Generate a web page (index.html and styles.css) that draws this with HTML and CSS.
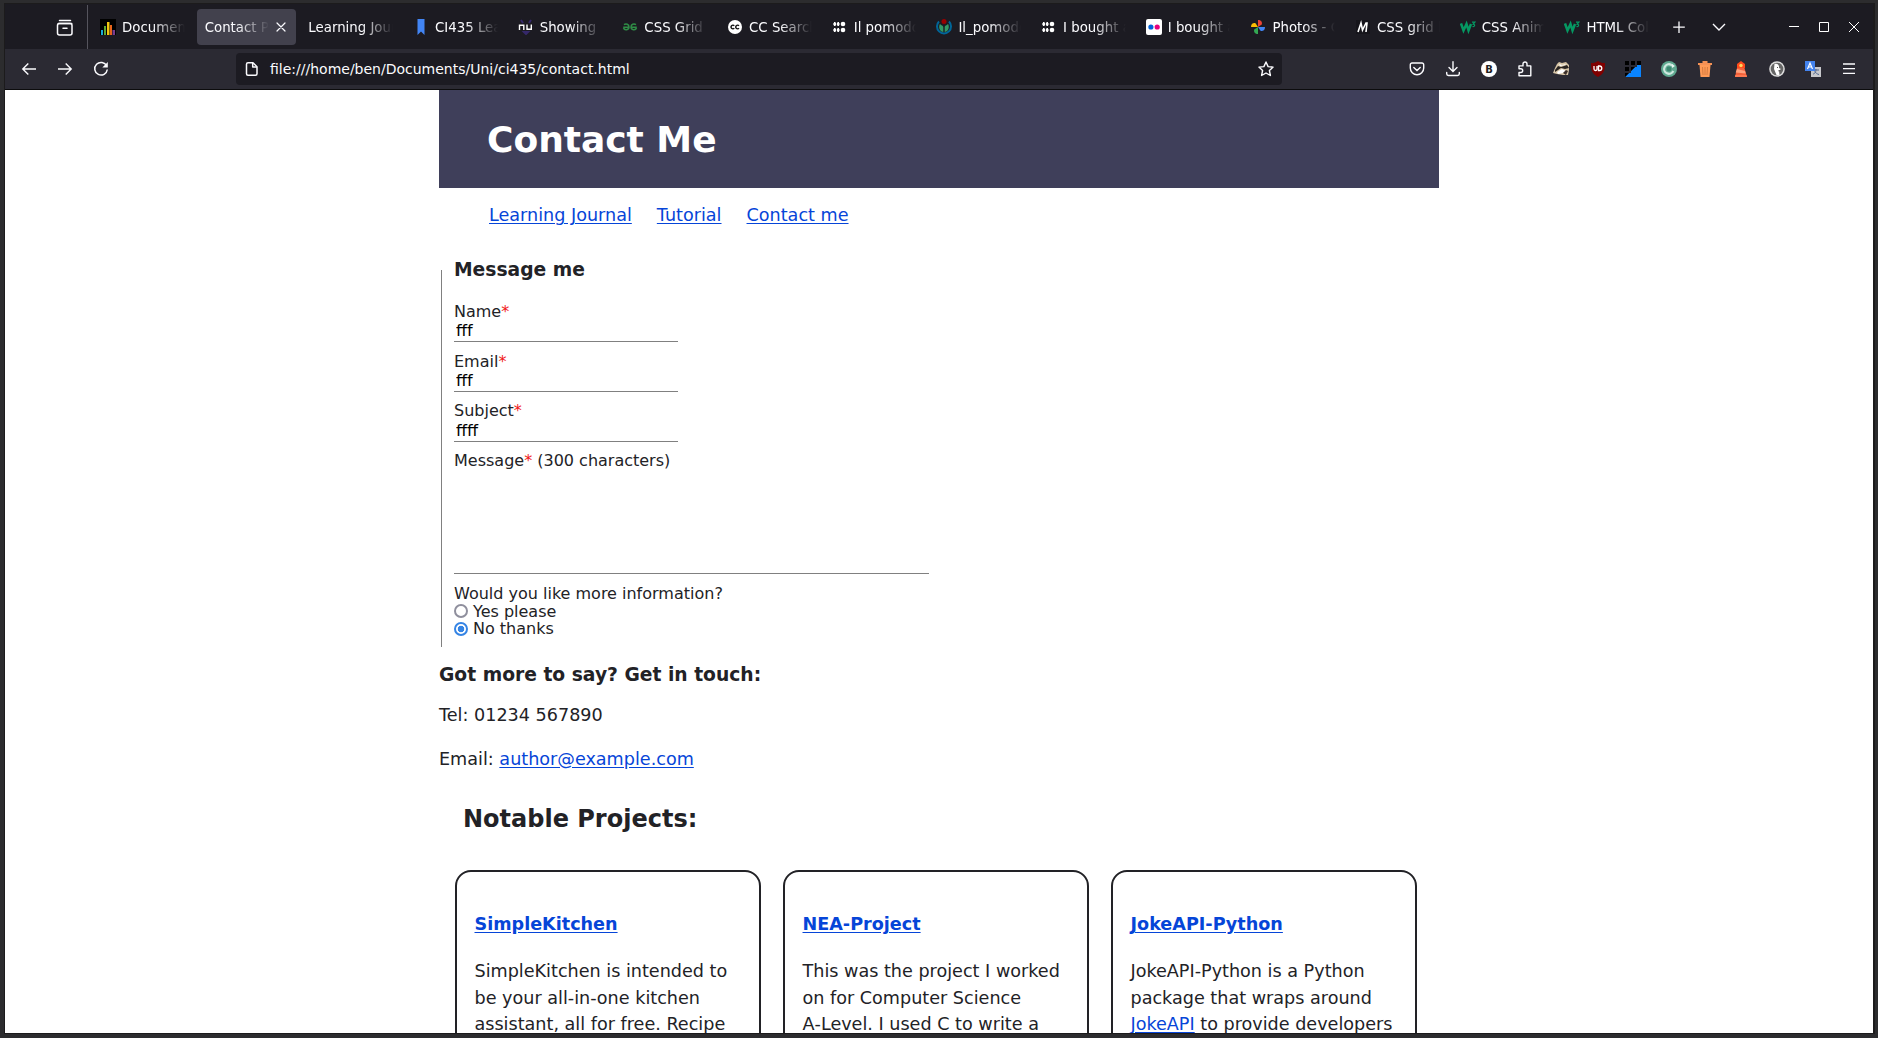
FILE: index.html
```html
<!DOCTYPE html>
<html lang="en">
<head>
<meta charset="utf-8">
<title>Contact Page</title>
<link rel="stylesheet" href="styles.css">
</head>
<body>
<div class="window">
  <div class="tabbar">
    <svg class="view-icon" width="18" height="18" viewBox="0 0 18 18" fill="none" stroke="#fbfbfe" stroke-width="1.5" stroke-linecap="round"><path d="M3.5 1.5h11M2.3 4.5h13.4"/><rect x="1.5" y="4.5" width="14.5" height="11.5" rx="2"/><path d="M7 9.2h4"/></svg>
    <div class="tabs">
      <div class="tab"><svg width="16" height="16" viewBox="0 0 16 16"><path d="M0 0h16v16H0z" fill="#000"/><path d="M1 11h2v5H1z" fill="#19a9d5"/><path d="M4 7h2v9H4z" fill="#5aa832"/><path d="M7 3h2.500v13H7z" fill="#f1c40f"/><path d="M10 6h2v10h-2z" fill="#e8641b"/><path d="M12.500 11h2.500v5h-2.500z" fill="#7a3c8e"/></svg><span class="label">Documents</span></div>
      <div class="tab active"><span class="label">Contact Page</span><svg class="close" width="16" height="16" viewBox="0 0 16 16" stroke="#fbfbfe" stroke-width="1.200" stroke-linecap="round"><path d="M4 4l8 8M12 4l-8 8"/></svg></div>
      <div class="tab"><span class="label">Learning Journal</span></div>
      <div class="tab"><svg width="16" height="16" viewBox="0 0 16 16"><path d="M4.500 0h7v16L8 12.500 4.500 16z" fill="#4285f4"/></svg><span class="label">CI435 Learning</span></div>
      <div class="tab"><svg width="16" height="16" viewBox="0 0 16 16"><path d="M3 1l2 3M13 1l-2 3M6 13l2 2 2-2z" stroke="#35286a" stroke-width="2" fill="#35286a"/><path d="M1.500 11V6.200h4.300V11M9 5.500v4.800h4.300V5.500" fill="none" stroke="#fff" stroke-width="1.400"/></svg><span class="label">Showing results</span></div>
      <div class="tab"><svg width="16" height="16" viewBox="0 0 16 16" fill="none" stroke="#2f8d46" stroke-width="1.500"><path d="M7 8.300H1.200M2 5.700c2-1.500 5-.5 5 2.300 0 3-4.500 4-5.500.8M9 8.300h5.800M14 5.700c-2-1.500-5-.5-5 2.300 0 3 4.500 4 5.500.8"/></svg><span class="label">CSS Grid Layout</span></div>
      <div class="tab"><svg width="16" height="16" viewBox="0 0 16 16"><circle cx="8" cy="8" r="7" fill="#fff"/><path d="M7.300 6.700a1.900 1.900 0 1 0 0 2.600M12 6.700a1.900 1.900 0 1 0 0 2.600" fill="none" stroke="#111" stroke-width="1.400"/></svg><span class="label">CC Search</span></div>
      <div class="tab"><svg width="16" height="16" viewBox="0 0 16 16" fill="#fff"><path d="M2 3h1.500v4H2zM5.500 3H7v4H5.500zM2 9h1.500v4H2zM5.500 9H7v4H5.500z"/><circle cx="11" cy="5" r="2.300"/><circle cx="11" cy="11" r="2.300"/><circle cx="2.700" cy="5" r="1.500"/><circle cx="6.200" cy="5" r="1.500"/><circle cx="2.700" cy="11" r="1.500"/><circle cx="6.200" cy="11" r="1.500"/></svg><span class="label">Il pomodoro</span></div>
      <div class="tab"><svg width="16" height="16" viewBox="0 0 16 16"><path d="M3 2.500a7 7 0 1 0 10 0" fill="none" stroke="#006699" stroke-width="2"/><path d="M7.300 13C2 12 3 6 4 5c1.500 2 3 1 3.300 3zM8.700 13C14 12 13 6 12 5c-1.500 2-3 1-3.300 3z" fill="#339966"/><circle cx="8" cy="2.500" r="2.500" fill="#990000"/></svg><span class="label">Il_pomodoro</span></div>
      <div class="tab"><svg width="16" height="16" viewBox="0 0 16 16" fill="#fff"><path d="M2 3h1.500v4H2zM5.500 3H7v4H5.500zM2 9h1.500v4H2zM5.500 9H7v4H5.500z"/><circle cx="11" cy="5" r="2.300"/><circle cx="11" cy="11" r="2.300"/><circle cx="2.700" cy="5" r="1.500"/><circle cx="6.200" cy="5" r="1.500"/><circle cx="2.700" cy="11" r="1.500"/><circle cx="6.200" cy="11" r="1.500"/></svg><span class="label">I bought a</span></div>
      <div class="tab"><svg width="16" height="16" viewBox="0 0 16 16"><rect width="16" height="16" rx="2" fill="#fff"/><circle cx="4.900" cy="8" r="2.600" fill="#0063dc"/><circle cx="11.200" cy="8" r="2.600" fill="#e6007e"/></svg><span class="label">I bought a</span></div>
      <div class="tab"><svg width="16" height="16" viewBox="0 0 16 16"><path d="M8 8V1c3 0 4.500 2 3.800 4.500z" fill="#ea4335"/><path d="M8 8h7c0 3-2 4.500-4.500 3.800z" fill="#4285f4"/><path d="M8 8v7c-3 0-4.500-2-3.800-4.500z" fill="#34a853"/><path d="M8 8H1c0-3 2-4.500 4.500-3.800z" fill="#fbbc04"/></svg><span class="label">Photos - Google</span></div>
      <div class="tab"><svg width="16" height="16" viewBox="0 0 16 16"><path d="M1 1h14v14H1z" fill="#15141a"/><path d="M3 13l3-9 1.500 7L11 4l1 0-1 9" fill="none" stroke="#fff" stroke-width="1.600"/></svg><span class="label">CSS grid layout</span></div>
      <div class="tab"><svg width="16" height="16" viewBox="0 0 16 16" fill="none" stroke="#059862"><path d="M1 4.500l2.500 7L6.500 5l2 6.500L11 5" stroke-width="2.500"/><path d="M12 3.200h2.800L13.200 5.200c2 0 2 2.600-.7 2.300" stroke-width="1.200"/></svg><span class="label">CSS Animations</span></div>
      <div class="tab"><svg width="16" height="16" viewBox="0 0 16 16" fill="none" stroke="#059862"><path d="M1 4.500l2.500 7L6.500 5l2 6.500L11 5" stroke-width="2.500"/><path d="M12 3.200h2.800L13.200 5.200c2 0 2 2.600-.7 2.300" stroke-width="1.200"/></svg><span class="label">HTML Colors</span></div>
    </div>
    <svg class="new-tab" width="16" height="16" viewBox="0 0 16 16" stroke="#fbfbfe" stroke-width="1.300"><path d="M8 2.500v11.500M2.200 8.200h11.600"/></svg>
    <svg class="all-tabs" width="16" height="16" viewBox="0 0 16 16" fill="none" stroke="#fbfbfe" stroke-width="1.400"><path d="M2 5l6 6 6-6"/></svg>
    <div class="controls">
      <svg width="12" height="12" viewBox="0 0 12 12" stroke="#fff"><path d="M1 5.500h10"/></svg>
      <svg width="12" height="12" viewBox="0 0 12 12" stroke="#fff" fill="none"><path d="M1.500 1.500h9v9h-9z"/></svg>
      <svg width="12" height="12" viewBox="0 0 12 12" stroke="#fff"><path d="M1 1l10 10M11 1L1 11"/></svg>
    </div>
  </div>

  <div class="toolbar">
    <div class="navigation">
      <svg width="16" height="16" viewBox="0 0 16 16" fill="none" stroke="#fbfbfe" stroke-width="1.400"><path d="M15 8H2M7.300 2.500L1.800 8l5.500 5.500"/></svg>
      <svg width="16" height="16" viewBox="0 0 16 16" fill="none" stroke="#fbfbfe" stroke-width="1.400"><path d="M1 8h13M8.700 2.500L14.200 8l-5.500 5.500"/></svg>
      <svg width="16" height="16" viewBox="0 0 16 16" fill="none" stroke="#fbfbfe" stroke-width="1.500"><path d="M13.700 5A6.300 6.300 0 1 0 14.300 8.500"/><path d="M14.800 1v5.500H9.300z" fill="#fbfbfe" stroke="none"/></svg>
    </div>
    <div class="urlbar">
      <svg width="16" height="16" viewBox="0 0 16 16" fill="none" stroke="#fbfbfe" stroke-width="1.500" stroke-linejoin="round"><path d="M4 1.700h5l4 4v7.100a1.500 1.500 0 0 1-1.500 1.500H4a1.500 1.500 0 0 1-1.500-1.500V3.200A1.500 1.500 0 0 1 4 1.700z"/><path d="M8.700 2v4H13"/></svg>
      <span class="address">file:///home/ben/Documents/Uni/ci435/contact.html</span>
      <svg width="16" height="16" viewBox="0 0 16 16" fill="none" stroke="#fbfbfe" stroke-width="1.400" stroke-linejoin="round"><path d="M8 1l2.100 4.600 5 .5-3.700 3.400 1 5L8 12l-4.400 2.500 1-5L.9 6.100l5-.5z"/></svg>
    </div>
    <div class="extensions">
      <svg width="16" height="16" viewBox="0 0 16 16" fill="none" stroke="#fbfbfe" stroke-width="1.400" stroke-linecap="round"><path d="M3 2h10a1.700 1.700 0 0 1 1.700 1.700V7a6.700 6.700 0 0 1-13.400 0V3.700A1.700 1.700 0 0 1 3 2z"/><path d="M4.800 6.500L8 9.500l3.200-3"/></svg>
      <svg width="16" height="16" viewBox="0 0 16 16" fill="none" stroke="#fbfbfe" stroke-width="1.400" stroke-linecap="round"><path d="M8 .8v9.500M4 6.600l4 4 4-4M1.700 11.500v1.300a1.700 1.700 0 0 0 1.700 1.700h9.200a1.700 1.700 0 0 0 1.700-1.700v-1.300"/></svg>
      <svg width="16" height="16" viewBox="0 0 16 16"><circle cx="8" cy="8" r="8" fill="#fff"/><text x="8" y="11.500" text-anchor="middle" class="glyph-b">B</text></svg>
      <svg width="16" height="16" viewBox="0 0 16 16" fill="none" stroke="#fbfbfe" stroke-width="1.400" stroke-linejoin="round"><path d="M2 14.800V11.500h1.800a1.900 1.900 0 0 0 0-3.800H2V4.900h4V3a2 2 0 0 1 4 0v1.900h3.800v9.900z"/></svg>
      <svg width="17" height="16" viewBox="0 0 17 16"><path d="M0 12l2-5 2-4 2-2 3 1 4-1 3 3v5l-1 5h-5l-6-1z" fill="#d8c6a8"/><path d="M2 9l3-4 3 1 6-2 2 3-4 1-4-1-6 4z" fill="#2a2522"/><path d="M4 11l5-3 4 2-3 2-5 1zM6 3l3 1 4-1-1 1-5 1z" fill="#fff"/><path d="M10 12l3-3 2 1-2 4z" fill="#3b2f2a"/></svg>
      <svg width="16" height="16" viewBox="0 0 16 16"><path d="M8 0c2.500 1.800 4.500 2 7 2 0 7-1 11-7 14C2 13 1 9 1 2c2.500 0 4.500-.2 7-2z" fill="#800000"/><path d="M4 5v3q0 1.500 1.500 1.500T7 8V5M8.500 5v4.500h1q2.300 0 2.300-2.200T9.500 5z" fill="none" stroke="#fff" stroke-width="1.300"/></svg>
      <svg width="16" height="16" viewBox="0 0 16 16"><path d="M16 0v16H0z" fill="#0a84ff"/><path d="M0 0h4v4H0zM6 0h4v4H6zM12 0h4v4h-4zM0 6h4v4H0zM6 6h4l-4 4zM0 12h4l-4 4z" fill="#000"/><path d="M10 4h2v2h-2zM4 10h2v2H4z" fill="#2b2a33"/></svg>
      <svg width="16" height="16" viewBox="0 0 16 16"><circle cx="8" cy="8" r="8" fill="#5fa890"/><circle cx="8" cy="8" r="4.800" fill="none" stroke="#cfe8df" stroke-width="2.200" stroke-dasharray="24 6" transform="rotate(25 8 8)"/><circle cx="8" cy="8" r="2.400" fill="#3b8770"/><path d="M11 3l3 2-3 2z" fill="#e8f5f0"/></svg>
      <svg width="16" height="16" viewBox="0 0 16 16"><path d="M1 2h4.500V0h5v2H15v2H1z" fill="#f59155"/><path d="M2.500 4h11l-1 12h-9z" fill="#ff9a56"/><path d="M5.500 6l.5 8M8 6v8M10.500 6l-.5 8" stroke="#d67c40"/></svg>
      <svg width="16" height="16" viewBox="0 0 16 16"><path d="M4 3L8 0l4 3v4H4z" fill="#ff4a1c"/><path d="M4 7h7.500L14 16H2z" fill="#f4623a"/><path d="M4 8l8 2 .7 2.500-10-1z" fill="#ffa27d"/><circle cx="8" cy="4.500" r="1.700" fill="#ffd75e"/><path d="M2.300 14h11.200l.5 2H2z" fill="#ff7850"/></svg>
      <svg width="16" height="16" viewBox="0 0 16 16"><circle cx="8" cy="8" r="7.800" fill="#ddd"/><circle cx="8" cy="8" r="6.300" fill="#666"/><path d="M5.500 3c3-1 5 1 4.500 4l2 1-2 1.500L10.500 14H7.500L5 8z" fill="#fff"/><path d="M8 6h1v1H8zM9.500 9l3 .5-3 1z" fill="#555"/></svg>
      <svg width="16" height="16" viewBox="0 0 16 16"><path d="M6 6h10v10H6z" fill="#c8c8cc"/><path d="M8 9h6M11 8c0 4-2 5-3 5M9.500 10.500c1 1 3 3 4.500 3" stroke="#53688f" fill="none"/><path d="M0 0h10v10H0z" fill="#4383ee"/><path d="M2.500 8L5 2l2.500 6M3.500 6h3" stroke="#fff" stroke-width="1.200" fill="none"/></svg>
      <svg width="16" height="16" viewBox="0 0 16 16" stroke="#fbfbfe" stroke-width="1.300"><path d="M2 3h12M2 7.700h12M2 12.400h12"/></svg>
    </div>
  </div>

  <div class="viewport">
    <div class="page">
      <header class="banner"><h1>Contact Me</h1></header>
      <nav class="menu"><a href="#">Learning Journal</a><a href="#">Tutorial</a><a href="#">Contact me</a></nav>
      <fieldset class="form">
        <legend>Message me</legend>
        <div class="fields">
          <div class="field short"><label>Name<span class="required">*</span></label><input class="text" value="fff"></div>
          <div class="field short"><label>Email<span class="required">*</span></label><input class="text" value="fff"></div>
          <div class="field"><label>Subject<span class="required">*</span></label><input class="text" value="ffff"></div>
          <div class="field"><label>Message<span class="required">*</span> (300 characters)</label><textarea class="message"></textarea></div>
          <div class="choices">
            <p>Would you like more information?</p>
            <label class="choice"><span class="radio"></span>Yes please</label>
            <label class="choice"><span class="radio checked"></span>No thanks</label>
          </div>
        </div>
      </fieldset>
      <section class="touch">
        <h3>Got more to say? Get in touch:</h3>
        <p>Tel: 01234 567890</p>
        <p>Email: <a href="#">author@example.com</a></p>
      </section>
      <h2 class="projects-title">Notable Projects:</h2>
      <div class="projects">
        <article class="card"><h4><a href="#">SimpleKitchen</a></h4><p>SimpleKitchen is intended to be your all-in-one kitchen assistant, all for free. Recipe</p></article>
        <article class="card"><h4><a href="#">NEA-Project</a></h4><p>This was the project I worked on for Computer Science A‑Level. I used C to write a</p></article>
        <article class="card"><h4><a href="#">JokeAPI-Python</a></h4><p>JokeAPI-Python is a Python package that wraps around <a href="#">JokeAPI</a> to provide developers</p></article>
      </div>
    </div>
  </div>
</div>
</body>
</html>
```
FILE: styles.css
```css
* { box-sizing: border-box; }

body {
  margin: 0;
  height: 1038px;
  overflow: hidden;
  font-family: "DejaVu Sans", sans-serif;
  color: #222226;
  background: #1c1b1f;
}

svg { flex: none; display: block; }

h1, h2, h3, h4, p { margin: 0; }

a { color: #0645d8; text-underline-offset: 2px; }

.window {
  display: flex;
  flex-direction: column;
  height: 1038px;
  padding: 1px 2px 1px 1px;
  border: 3px solid #2c2c2e;
  border-width: 3px 3px 4px 4px;
  background: #1c1b1c;
}

/* Tab strip */
.tabbar {
  display: flex;
  align-items: center;
  flex: none;
  height: 45px;
  padding: 1px 13px 0 0;
  background: #1c1b22;
}

.view-icon { margin: 1px 13px 0 51px; }

.tabs {
  display: flex;
  align-items: center;
  width: 1572px;
  height: 44px;
  padding-left: 2px;
  border-left: 1px solid #55545d;
}

.tab {
  display: flex;
  align-items: center;
  gap: 6px;
  flex: 1 1 0;
  min-width: 0;
  height: 36px;
  margin: 0 2px;
  padding: 0 8px;
  border-radius: 4px;
  font-size: 13.33px;
  color: #fbfbfe;
}

.tab.active { background: #42414d; padding-right: 7px; gap: 4px; }

.label {
  flex: 1;
  overflow: hidden;
  white-space: nowrap;
  mask-image: linear-gradient(to left, transparent, #000 32px);
}

.new-tab { margin-left: 11.5px; }
.all-tabs { margin-left: 24px; }

.controls {
  display: flex;
  gap: 18px;
  margin-left: auto;
}

/* Navigation toolbar */
.toolbar {
  display: flex;
  align-items: center;
  flex: none;
  height: 41px;
  padding: 0 16px 0 16px;
  border-bottom: 1px solid #0c0c0d;
  background: #2b2a33;
}

.navigation { display: flex; gap: 20px; width: 215px; }

.urlbar {
  display: flex;
  align-items: center;
  width: 1046px;
  height: 32px;
  padding: 0 8px;
  border-radius: 4px;
  background: #1c1b22;
}

.address {
  flex: 1;
  margin-left: 10px;
  font-size: 14px;
  color: #fbfbfe;
}

.extensions {
  display: flex;
  justify-content: space-between;
  width: 448px;
  margin-left: auto;
}

.glyph-b { font: bold 10px "DejaVu Sans", sans-serif; fill: #222; }

/* Web page */
.viewport {
  flex: 1;
  min-height: 0;
  overflow: hidden;
  background: #fff;
}

.page {
  width: 1000px;
  margin: 0 auto;
  font-size: 17.6px;
  line-height: 26.4px;
}

.banner {
  height: 98px;
  padding-left: 48px;
  background: #3f3f5a;
}

.banner h1 { font-size: 36px; line-height: 100px; color: #fff; }

.menu {
  display: flex;
  gap: 25px;
  padding: 14px 0 0 50px;
}

.form {
  height: 388px;
  margin: 30.6px 0 0 2px;
  padding: 0 0 0 12px;
  border: 0;
  border-left: 1px solid #808080;
  font-size: 16px;
  line-height: 18px;
}

.form legend {
  padding: 0;
  font-size: 18.72px;
  font-weight: bold;
  line-height: 22px;
}

.fields { padding-top: 21px; }

.field {
  display: flex;
  flex-direction: column;
  align-items: flex-start;
  margin-bottom: 10px;
}

.field.short label { line-height: 20px; margin-bottom: -2px; }

.required { color: #f01818; }

.text, .message {
  padding: 0 2px;
  border: 0;
  border-bottom: 1px solid #808080;
  outline: 0;
  background: none;
  font: 16px "DejaVu Sans", sans-serif;
  color: #000;
}

.text { width: 224px; height: 22px; }

.message { width: 475px; height: 104px; resize: none; }

.choices { padding-top: 1px; line-height: 17.6px; }

.choice { display: flex; align-items: center; gap: 5px; }

.radio {
  width: 14px;
  height: 14px;
  border: 2px solid #8f8f9d;
  border-radius: 50%;
}

.radio.checked {
  border-color: #3584e4;
  background: radial-gradient(circle, #3584e4 3px, #fff 3.6px);
}

.touch { padding-top: 16.5px; }
.touch h3 { font-size: 18.72px; line-height: 22px; margin-bottom: 16px; }
.touch p + p { margin-top: 17.6px; }

.projects-title {
  padding: 32px 0 0 24px;
  font-size: 24px;
  line-height: 30px;
}

.projects {
  display: grid;
  grid-template-columns: repeat(3, 306px);
  gap: 22px;
  padding: 36px 16px 0;
}

.card {
  height: 320px;
  padding: 39.5px 17.5px;
  border: 2px solid #222226;
  border-radius: 16px;
}

.card h4 { margin-bottom: 20.6px; }
```
